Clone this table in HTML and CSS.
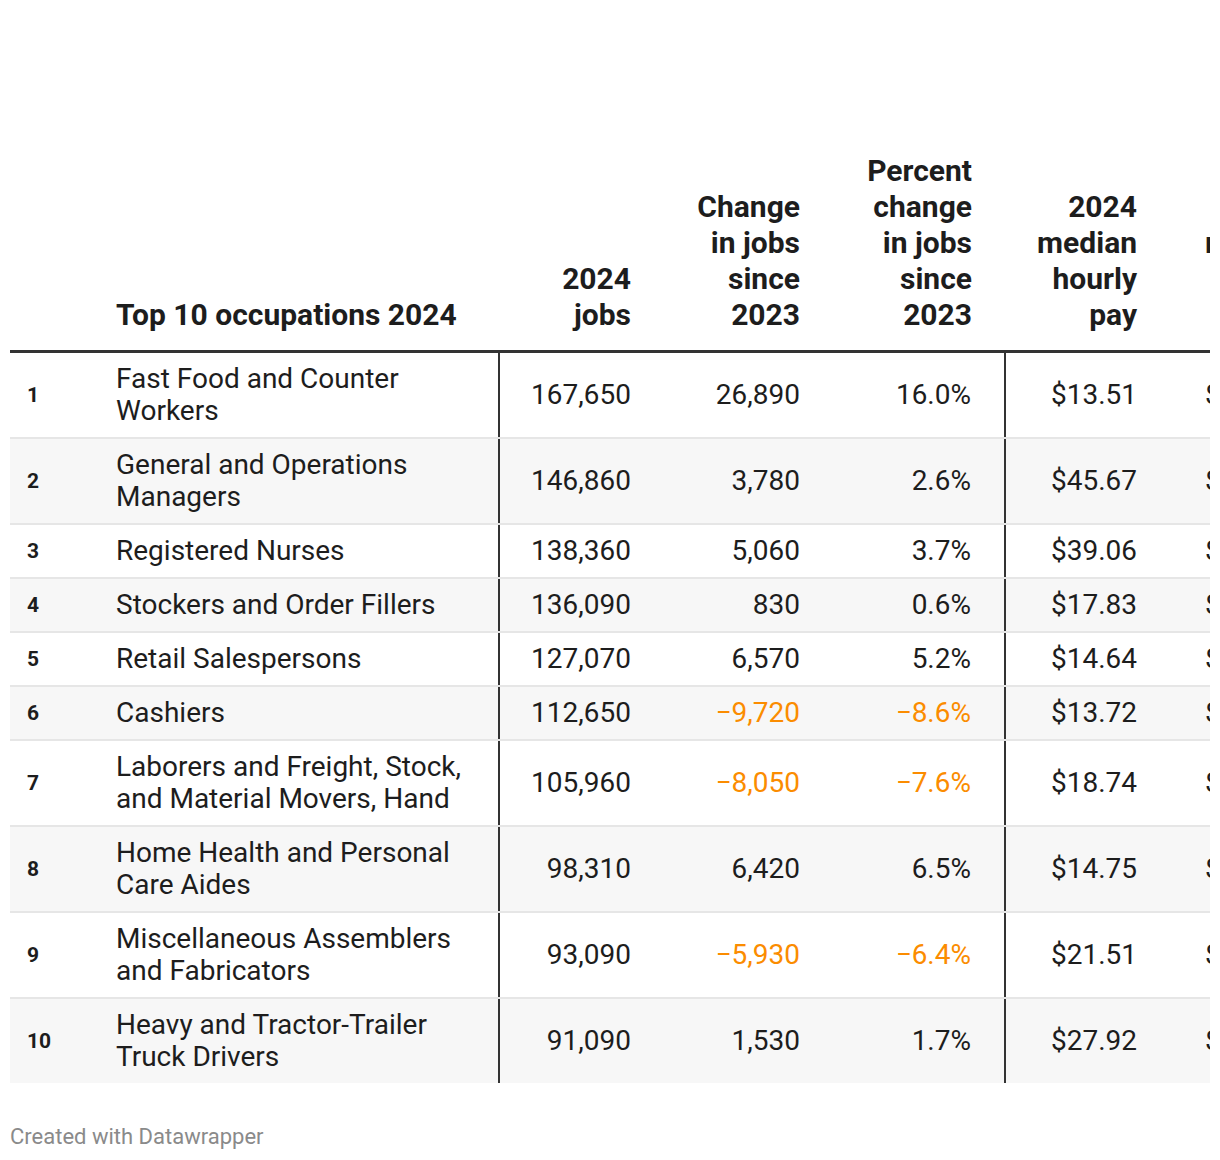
FILE: index.html
```html
<!DOCTYPE html>
<html lang="en">
<head>
<meta charset="utf-8">
<title>Top 10 occupations 2024</title>
<link rel="stylesheet" href="styles.css">
</head>
<body>
<div class="chart">
  <div class="table-wrap">
    <table class="dw-table">
      <colgroup>
        <col class="c-rank">
        <col class="c-name">
        <col class="c-jobs">
        <col class="c-chg">
        <col class="c-pct">
        <col class="c-hourly">
        <col class="c-annual">
      </colgroup>
      <thead>
        <tr>
          <th class="rank"></th>
          <th class="name">Top 10 occupations 2024</th>
          <th class="num">2024<br>jobs</th>
          <th class="num">Change<br>in jobs<br>since<br>2023</th>
          <th class="num pct">Percent<br>change<br>in jobs<br>since<br>2023</th>
          <th class="num hourly">2024<br>median<br>hourly<br>pay</th>
          <th class="num">2024<br>median<br>annual<br>pay</th>
        </tr>
      </thead>
      <tbody>
        <tr><td class="rank">1</td><td class="name">Fast Food and Counter Workers</td><td class="num">167,650</td><td class="num">26,890</td><td class="num pct">16.0%</td><td class="num hourly">$13.51</td><td class="num">$28,100</td></tr>
        <tr><td class="rank">2</td><td class="name">General and Operations Managers</td><td class="num">146,860</td><td class="num">3,780</td><td class="num pct">2.6%</td><td class="num hourly">$45.67</td><td class="num">$94,990</td></tr>
        <tr><td class="rank">3</td><td class="name">Registered Nurses</td><td class="num">138,360</td><td class="num">5,060</td><td class="num pct">3.7%</td><td class="num hourly">$39.06</td><td class="num">$81,250</td></tr>
        <tr><td class="rank">4</td><td class="name">Stockers and Order Fillers</td><td class="num">136,090</td><td class="num">830</td><td class="num pct">0.6%</td><td class="num hourly">$17.83</td><td class="num">$37,090</td></tr>
        <tr><td class="rank">5</td><td class="name">Retail Salespersons</td><td class="num">127,070</td><td class="num">6,570</td><td class="num pct">5.2%</td><td class="num hourly">$14.64</td><td class="num">$30,450</td></tr>
        <tr><td class="rank">6</td><td class="name">Cashiers</td><td class="num">112,650</td><td class="num neg">−9,720</td><td class="num pct neg">−8.6%</td><td class="num hourly">$13.72</td><td class="num">$28,540</td></tr>
        <tr><td class="rank">7</td><td class="name">Laborers and Freight, Stock, and Material Movers, Hand</td><td class="num">105,960</td><td class="num neg">−8,050</td><td class="num pct neg">−7.6%</td><td class="num hourly">$18.74</td><td class="num">$38,980</td></tr>
        <tr><td class="rank">8</td><td class="name">Home Health and Personal Care Aides</td><td class="num">98,310</td><td class="num">6,420</td><td class="num pct">6.5%</td><td class="num hourly">$14.75</td><td class="num">$30,680</td></tr>
        <tr><td class="rank">9</td><td class="name">Miscellaneous Assemblers and Fabricators</td><td class="num">93,090</td><td class="num neg">−5,930</td><td class="num pct neg">−6.4%</td><td class="num hourly">$21.51</td><td class="num">$44,740</td></tr>
        <tr><td class="rank">10</td><td class="name">Heavy and Tractor-Trailer Truck Drivers</td><td class="num">91,090</td><td class="num">1,530</td><td class="num pct">1.7%</td><td class="num hourly">$27.92</td><td class="num">$58,070</td></tr>
      </tbody>
    </table>
  </div>
  <div class="footer">Created with Datawrapper</div>
</div>
</body>
</html>
```

FILE: styles.css
```css
html, body {
  margin: 0;
  padding: 0;
  background: #ffffff;
}

body {
  font-family: Roboto, "Liberation Sans", sans-serif;
  color: #1d1d1d;
}

.chart {
  padding: 153px 10px 0 10px;
}

.table-wrap {
  width: 1200px;
  overflow: hidden;
}

.dw-table {
  border-collapse: collapse;
  table-layout: fixed;
  width: 1305px;
  font-size: 28px;
}

.c-rank { width: 96px; }
.c-name { width: 393px; }
.c-jobs { width: 142px; }
.c-chg { width: 169px; }
.c-pct { width: 195px; }
.c-hourly { width: 142px; }
.c-annual { width: 168px; }

.dw-table th {
  font-size: 30px;
  font-weight: 700;
  line-height: 36px;
  vertical-align: bottom;
  padding: 0 10px 17px 10px;
  border-bottom: 3px solid #333333;
  text-align: left;
}

.dw-table td {
  line-height: 32px;
  padding: 10px 10px;
  vertical-align: middle;
  border-bottom: 2px solid #e6e6e6;
}

.dw-table tbody tr:nth-child(even) td {
  background: #f7f7f7;
}

.dw-table tbody tr:last-child td {
  border-bottom: none;
}

.dw-table td.rank {
  padding-left: 17px;
  font-size: 21px;
  font-weight: 700;
}

.dw-table .name {
  padding-left: 10px;
  border-right: 2px solid #333333;
}

.dw-table th.name {
  border-right: none;
}

.dw-table .num {
  text-align: right;
  font-variant-numeric: tabular-nums;
}

.dw-table .pct {
  padding-right: 33px;
  border-right: 2px solid #333333;
}

.dw-table th.pct {
  border-right: none;
}

.dw-table .neg {
  color: #fb8c00;
}

.footer {
  margin-top: 42px;
  font-size: 22px;
  line-height: 24px;
  color: #8a8a8a;
}
```
